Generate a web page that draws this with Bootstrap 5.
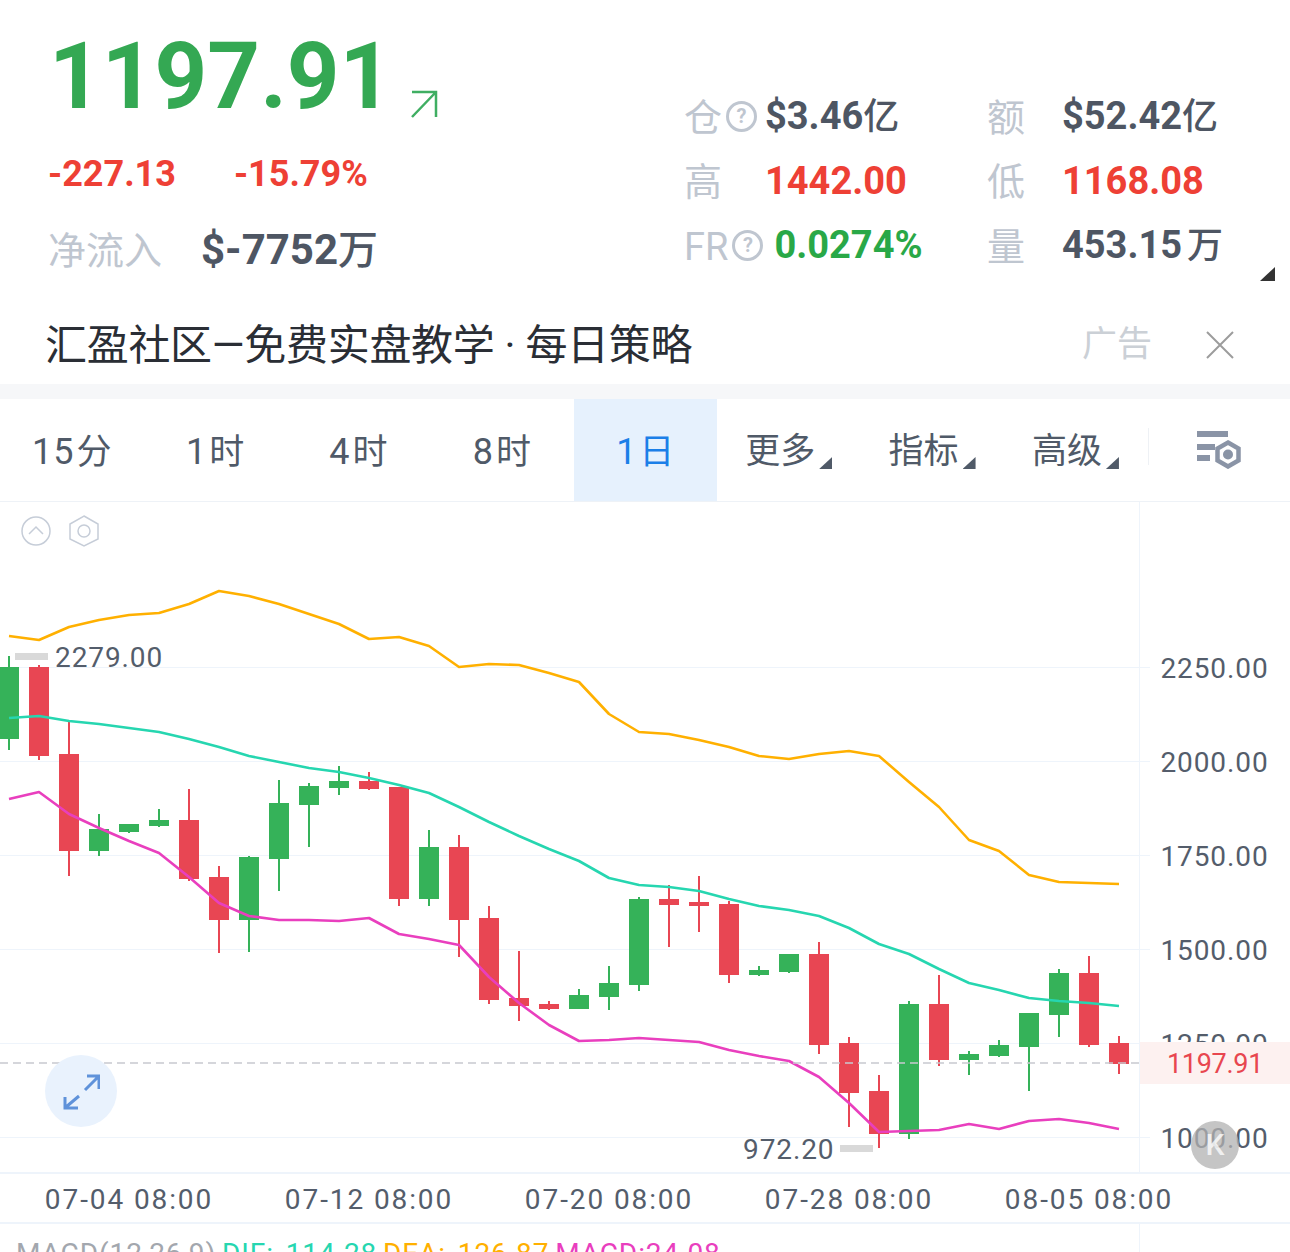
<!DOCTYPE html>
<html lang="zh">
<head>
  <meta charset="UTF-8" />
  <title>行情</title>
  <link href="https://cdn.jsdelivr.net/npm/bootstrap@5.3.0/dist/css/bootstrap.min.css" rel="stylesheet" />
  <style>
    html, body { height: 1252px; overflow: hidden; }
    body { background: #fff; font-family: Roboto, "Noto Sans CJK SC", sans-serif; color: #4e5663; }

    /* quote header */
    .quote-head { height: 306px; position: relative; }
    .quote-left { width: 684px; padding: 27px 0 0 48px; }
    .price-line { height: 100px; line-height: 100px; font-size: 92px; font-weight: 700; color: #34a853; padding-left: 1px; }
    .price-arrow { width: 30px; height: 30px; margin: 62px 0 0 17px; }
    .change-line { height: 48px; line-height: 48px; margin-top: 23px; font-size: 36px; font-weight: 700; color: #ee4035; gap: 58px; }
    .flow-line { height: 52px; line-height: 52px; margin-top: 26px; }
    .flow-label { width: 153px; font-size: 38px; color: #bfc6d0; padding-top: 1px; }
    .flow-value { font-size: 42px; font-weight: 700; }
    .unit-cjk { font-size: 36px; font-weight: 500; }
    .flow-value .unit-cjk { font-size: 40px; }
    .stat-grid { padding-top: 84px; display: grid; grid-template-columns: 303px 1fr; grid-auto-rows: 64.5px; flex: 1; }
    .stat-item { align-items: center; line-height: 1; }
    .stat-label { min-width: 81px; font-size: 38px; color: #bfc6d0; padding: 3px 8px 0 0; }
    .stat-label2 { min-width: 75px; font-size: 38px; color: #bfc6d0; padding-top: 3px; }
    .stat-value { font-size: 38px; font-weight: 700; }
    .tone-red { color: #ee4035; }
    .tone-green { color: #29a847; }
    .hint-mark { width: 31px; height: 31px; margin: -3px 0 0 4px; border: 3px solid #bfc6d0; border-radius: 50%; font-size: 20px; line-height: 25px; text-align: center; font-weight: 700; color: #bfc6d0; }
    .hint-wide { margin-right: 3px; }
    .unit-gap { margin-left: 5px; }
    .fold-mark { position: absolute; left: 1260px; top: 267px; width: 15px; height: 14px; background: #333; clip-path: polygon(100% 0, 100% 100%, 0 100%); }

    /* ad strip */
    .ad-strip { height: 78px; padding: 0 56px 0 45px; }
    .ad-text { font-size: 42px; letter-spacing: -.3px; color: #2a2e35; white-space: nowrap; line-height: 1.2; padding-top: 2px; }
    .ad-tag { font-size: 35px; color: #cbd0d6; margin-right: 54px; line-height: 1.2; }
    .ad-close { width: 28px; height: 28px; }
    .band { height: 15px; background: #f6f7f9; }

    /* period tabs */
    .tab-row { height: 103px; border-bottom: 1px solid #eef2f7; }
    .tab-cell { width: 143.4px; height: 102px; padding-top: 4px; font-size: 35px; color: #505a68; gap: 4px; }
    .tab-cell.is-on { background: #e6f1fd; color: #1b7fe8; }
    .tab-num { letter-spacing: 1px; margin-right: 2px; font-size: 36px; }
    .tab-caret { width: 13px; height: 12px; margin-top: 22px; background: #505a68; clip-path: polygon(100% 0, 100% 100%, 0 100%); }
    .tab-tool { flex: 1; position: relative; }
    .tab-tool::before { content: ""; position: absolute; left: 1px; top: 29px; width: 1px; height: 37px; background: #eef1f5; }

    /* chart */
    .chart-box { height: 750px; position: relative; }
    .chart-box svg { display: block; }
    .axis-text { font-size: 28px; letter-spacing: .9px; fill: #545d6b; }
    .axis-time { letter-spacing: 1.9px; }
    .last-price { font-size: 27px; letter-spacing: -.3px; fill: #e8464f; }
    .float-expand { position: absolute; left: 45px; top: 553px; width: 72px; height: 72px; border-radius: 50%; background: #e9f2fd; }
    .float-k { position: absolute; left: 1191px; top: 619px; width: 48px; height: 48px; border-radius: 50%; background: rgba(178, 178, 178, .75); color: rgba(255, 255, 255, .75); font-size: 30px; font-weight: 500; line-height: 48px; text-align: center; }
    .macd-line { position: absolute; left: 16px; top: 735px; font-size: 28px; letter-spacing: .9px; line-height: 34px; white-space: nowrap; color: #a3a7ae; }
    .macd-line span { word-spacing: 4px; margin-left: -2px; }
    .macd-dif { color: #26d6b0; }
    .macd-dea { color: #ffb000; }
    .macd-val { color: #e93fbe; }
  </style>
</head>
<body>
  <!-- QUOTE -->
  <div class="quote-head d-flex">
    <div class="quote-left">
      <div class="price-line d-flex">
        <span>1197.91</span>
        <svg class="price-arrow" viewBox="0 0 30 30" fill="none" stroke="#3fae62" stroke-width="2.5">
          <path d="M3 28 L27 3 M3 3 H27 V28" />
        </svg>
      </div>
      <div class="change-line d-flex"><span>-227.13</span><span>-15.79%</span></div>
      <div class="flow-line d-flex">
        <span class="flow-label">净流入</span>
        <span class="flow-value">$-7752<span class="unit-cjk">万</span></span>
      </div>
    </div>
    <div class="stat-grid">
      <div class="stat-item d-flex"><span class="stat-label d-flex align-items-center">仓<span class="hint-mark">?</span></span><span class="stat-value">$3.46<span class="unit-cjk">亿</span></span></div>
      <div class="stat-item d-flex"><span class="stat-label2">额</span><span class="stat-value">$52.42<span class="unit-cjk">亿</span></span></div>
      <div class="stat-item d-flex"><span class="stat-label">高</span><span class="stat-value tone-red">1442.00</span></div>
      <div class="stat-item d-flex"><span class="stat-label2">低</span><span class="stat-value tone-red">1168.08</span></div>
      <div class="stat-item d-flex"><span class="stat-label d-flex align-items-center">FR<span class="hint-mark hint-wide">?</span></span><span class="stat-value tone-green">0.0274%</span></div>
      <div class="stat-item d-flex"><span class="stat-label2">量</span><span class="stat-value">453.15<span class="unit-cjk unit-gap">万</span></span></div>
    </div>
    <div class="fold-mark"></div>
  </div>

  <!-- AD -->
  <div class="ad-strip d-flex align-items-center">
    <div class="ad-text flex-grow-1">汇盈社区—免费实盘教学 · 每日策略</div>
    <div class="ad-tag">广告</div>
    <svg class="ad-close" viewBox="0 0 28 28" stroke="#9c9c9c" stroke-width="2"><path d="M1 1 L27 27 M27 1 L1 27" /></svg>
  </div>
  <div class="band"></div>

  <!-- PERIODS -->
  <div class="tab-row d-flex">
    <div class="tab-cell d-flex align-items-center justify-content-center"><span><span class="tab-num">15</span>分</span></div>
    <div class="tab-cell d-flex align-items-center justify-content-center"><span><span class="tab-num">1</span>时</span></div>
    <div class="tab-cell d-flex align-items-center justify-content-center"><span><span class="tab-num">4</span>时</span></div>
    <div class="tab-cell d-flex align-items-center justify-content-center"><span><span class="tab-num">8</span>时</span></div>
    <div class="tab-cell is-on d-flex align-items-center justify-content-center"><span><span class="tab-num">1</span>日</span></div>
    <div class="tab-cell d-flex align-items-center justify-content-center">更多<span class="tab-caret"></span></div>
    <div class="tab-cell d-flex align-items-center justify-content-center">指标<span class="tab-caret"></span></div>
    <div class="tab-cell d-flex align-items-center justify-content-center">高级<span class="tab-caret"></span></div>
    <div class="tab-tool d-flex align-items-center justify-content-center">
      <svg width="44" height="38" viewBox="0 0 44 38" fill="#8a94a6">
        <rect x="0" y="0" width="31" height="6" />
        <rect x="0" y="13" width="18" height="6" />
        <rect x="0" y="24" width="13" height="6" />
        <path d="M31 11.5 L41.5 17.5 V29.5 L31 35.5 L20.5 29.5 V17.5 Z" fill="none" stroke="#8a94a6" stroke-width="4.5" />
        <circle cx="31" cy="23.5" r="5" />
      </svg>
    </div>
  </div>

  <!-- CHART -->
  <div class="chart-box">
    <svg id="kline" width="1290" height="750" viewBox="0 502 1290 750"></svg>
    <div class="float-expand d-flex align-items-center justify-content-center">
      <svg width="38" height="38" viewBox="0 0 38 38" fill="none" stroke="#5f92da" stroke-width="3">
        <path d="M23 18 L36 5 M25 4 H37 V17 M17 24 L4 35 M3 25 V36 H16" />
      </svg>
    </div>
    <div class="float-k">K</div>
    <div class="macd-line">MACD(12,26,9) <span class="macd-dif">DIF: 114.28</span> <span class="macd-dea">DEA: 126.87</span> <span class="macd-val">MACD:24.08</span></div>
  </div>

  <script>
    // [bodyTop, bodyBottom, wickTop, wickBottom, up?]
    const candles = [
      [667,739,656,750,1],[667,756,665,760,0],[754,851,721,876,0],[829,851,814,856,1],[824,832,824,833,1],
      [820,826,809,827,1],[820,879,789,881,0],[877,920,866,953,0],[857,920,856,952,1],[803,859,780,891,1],
      [786,805,783,847,1],[781,788,766,795,1],[781,789,772,790,0],[787,899,787,906,0],[847,899,830,906,1],
      [847,920,835,957,0],[918,1000,906,1004,0],[998,1006,951,1021,0],[1004,1009,1001,1010,0],[995,1009,989,1009,1],
      [983,997,966,1010,1],[899,985,897,991,1],[899,905,885,947,0],[902,906,876,932,0],[904,975,901,983,0],
      [970,975,966,976,1],[954,972,954,973,1],[954,1045,942,1054,0],[1043,1093,1037,1127,0],[1091,1134,1075,1148,0],
      [1004,1134,1001,1139,1],[1004,1060,975,1066,0],[1054,1060,1051,1075,1],[1045,1056,1040,1057,1],[1013,1047,1013,1091,1],
      [973,1015,969,1037,1],[973,1045,956,1047,0],[1043,1064,1036,1074,0]
    ];
    const upper = [636,640,627,620,615,613,604,591,596,604,614,624,639,637,646,667,664,665,673,682,714,732,734,740,747,756,759,754,751,756,782,807,840,851,875,882,883,884];
    const middle = [718,716,721,724,728,732,739,747,756,762,768,772,778,785,793,807,822,836,849,861,878,885,887,891,899,906,910,916,928,944,954,969,983,990,998,1001,1003,1006];
    const lower = [799,792,814,828,841,853,877,903,916,920,920,921,918,934,939,945,977,1003,1025,1041,1040,1038,1040,1042,1050,1056,1061,1077,1103,1132,1131,1130,1124,1129,1121,1119,1123,1129];
    const gridY = [667,761,855,949,1043,1137];
    const gridLabels = ["2250.00","2000.00","1750.00","1500.00","1250.00","1000.00"];
    const timeLabels = [[129,"07-04 08:00"],[369,"07-12 08:00"],[609,"07-20 08:00"],[849,"07-28 08:00"],[1089,"08-05 08:00"]];
    const xOf = i => 9 + 30 * i;
    const polyline = (ys, color) =>
      `<polyline fill="none" stroke="${color}" stroke-width="2.6" stroke-linejoin="round" points="${ys.map((y, i) => xOf(i) + "," + y).join(" ")}" />`;

    let out = "";
    gridY.forEach(y => { out += `<rect x="0" y="${y}" width="1150" height="1" fill="#eef4fb" />`; });
    out += `<rect x="1139" y="502" width="1" height="670" fill="#eef4fb" />`;
    out += `<rect x="0" y="1172" width="1290" height="2" fill="#eef4fb" />`;
    out += `<rect x="0" y="1222" width="1290" height="2" fill="#eef4fb" />`;
    out += `<rect x="1139" y="1224" width="1" height="28" fill="#eef4fb" />`;

    gridLabels.forEach((t, i) => {
      out += `<text class="axis-text" x="1214.5" y="${gridY[i] + 11}" text-anchor="middle">${t}</text>`;
    });
    timeLabels.forEach(([x, t]) => {
      out += `<text class="axis-text axis-time" x="${x}" y="1209" text-anchor="middle">${t}</text>`;
    });

    candles.forEach((c, i) => {
      const color = c[4] ? "#35b259" : "#e84653";
      out += `<rect x="${xOf(i) - 1}" y="${c[2]}" width="2" height="${c[3] - c[2]}" fill="${color}" />`;
      out += `<rect x="${xOf(i) - 10}" y="${c[0]}" width="20" height="${c[1] - c[0]}" fill="${color}" />`;
    });
    out += polyline(upper, "#ffb000") + polyline(middle, "#26d6b0") + polyline(lower, "#e93fbe");

    // last price line and tag
    out += `<line x1="0" y1="1063" x2="1140" y2="1063" stroke="#c7c9cf" stroke-width="1.5" stroke-dasharray="8 5" />`;
    out += `<rect x="1140" y="1042" width="150" height="42" fill="#fdf1f0" />`;
    out += `<text class="last-price" x="1215" y="1073" text-anchor="middle">1197.91</text>`;

    // high and low marks
    out += `<rect x="15" y="653" width="33" height="7" fill="#d9d9d9" />`;
    out += `<text class="axis-text" x="55" y="667">2279.00</text>`;
    out += `<rect x="840" y="1145" width="33" height="7" fill="#d9d9d9" />`;
    out += `<text class="axis-text" x="743" y="1159">972.20</text>`;

    // corner tools
    out += `<circle cx="36" cy="531" r="14" fill="none" stroke="#c6cdd8" stroke-width="1.5" />`;
    out += `<path d="M29 534 L36 527 L43 534" fill="none" stroke="#c6cdd8" stroke-width="1.5" />`;
    out += `<path d="M84 516 L98 524 V539 L84 546 L70 539 V524 Z" fill="none" stroke="#c6cdd8" stroke-width="1.5" />`;
    out += `<circle cx="84" cy="531" r="6" fill="none" stroke="#c6cdd8" stroke-width="1.5" />`;

    document.getElementById("kline").innerHTML = out;
  </script>
  <script src="https://cdn.jsdelivr.net/npm/bootstrap@5.3.0/dist/js/bootstrap.bundle.min.js"></script>
</body>
</html>
